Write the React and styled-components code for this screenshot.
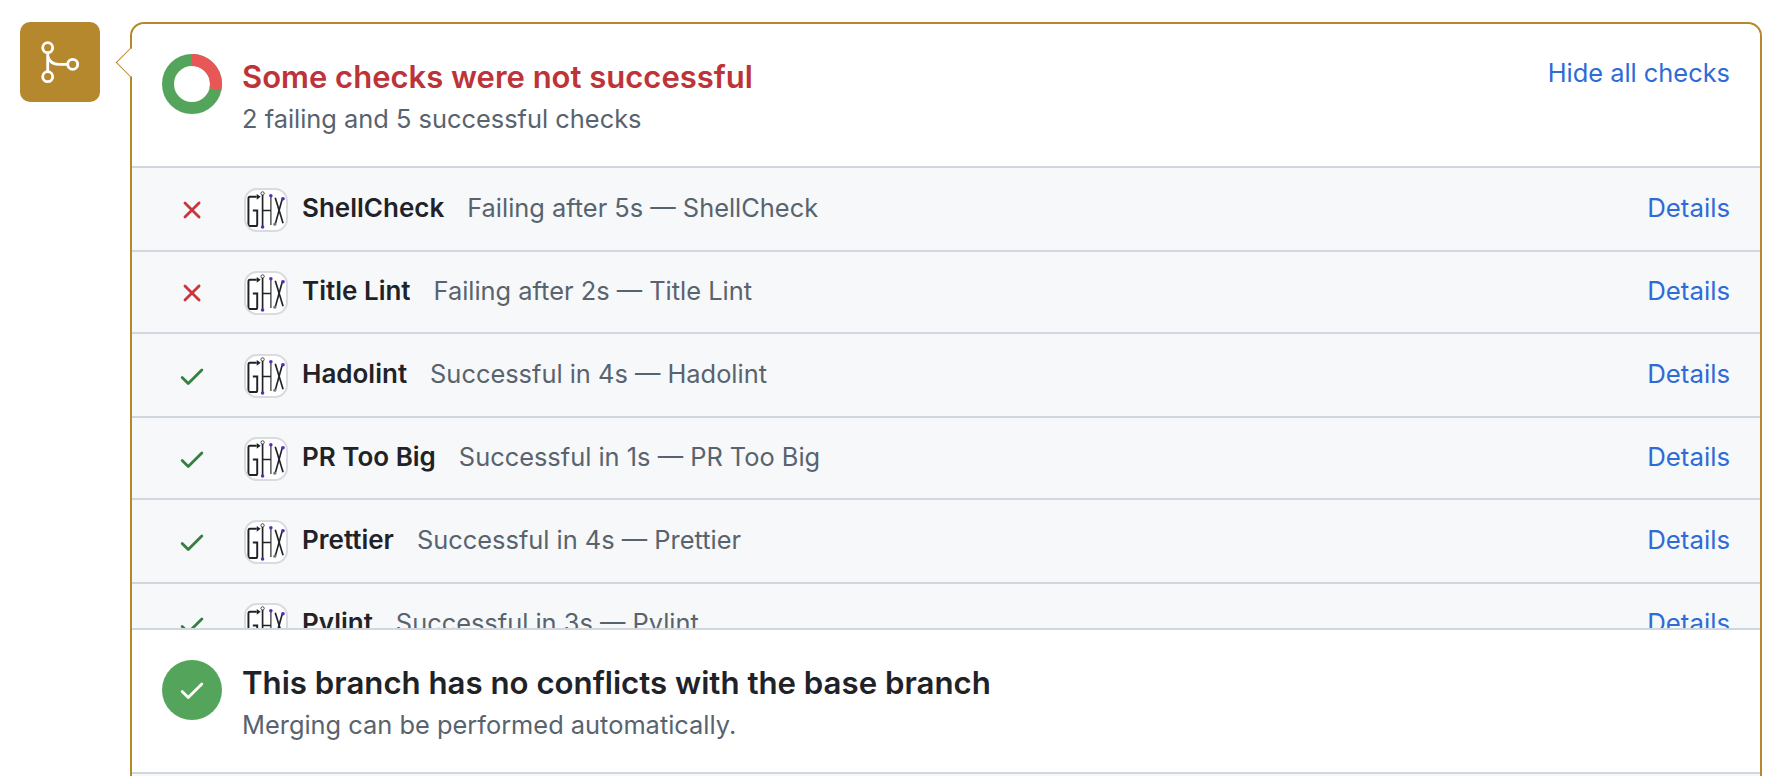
import styled, { createGlobalStyle } from "styled-components";

const CHECKS = [
    { name: "ShellCheck", text: "Failing after 5s — ShellCheck", failed: true },
    { name: "Title Lint", text: "Failing after 2s — Title Lint", failed: true },
    { name: "Hadolint", text: "Successful in 4s — Hadolint" },
    { name: "PR Too Big", text: "Successful in 1s — PR Too Big" },
    { name: "Prettier", text: "Successful in 4s — Prettier" },
    { name: "Pylint", text: "Successful in 3s — Pylint" },
];

const X_PATH = "M3.72 3.72a.75.75 0 0 1 1.06 0L8 6.94l3.22-3.22a.749.749 0 0 1 1.275.326.749.749 0 0 1-.215.734L9.06 8l3.22 3.22a.749.749 0 0 1-.326 1.275.749.749 0 0 1-.734-.215L8 9.06l-3.22 3.22a.751.751 0 0 1-1.042-.018.751.751 0 0 1-.018-1.042L6.94 8 3.72 4.78a.75.75 0 0 1 0-1.06Z";
const CHECK_PATH = "M13.78 4.22a.75.75 0 0 1 0 1.06l-7.25 7.25a.75.75 0 0 1-1.06 0L2.22 9.28a.751.751 0 0 1 .018-1.042.751.751 0 0 1 1.042-.018L6 10.94l6.72-6.72a.75.75 0 0 1 1.06 0Z";

const Octicon = ({ path, size, color }) => (
    <svg width={size} height={size} viewBox="0 0 16 16" fill={color}>
        <path d={path} />
    </svg>
);

const MergeIcon = () => (
    <svg width="48" height="48" viewBox="0 0 48 48" fill="none" stroke="#fff" strokeWidth="2.8">
        <circle cx="11.7" cy="9.7" r="5" />
        <circle cx="11.7" cy="38.7" r="5" />
        <circle cx="36.7" cy="26.3" r="5" />
        <path d="M11.7 14.7V33.7" />
        <path d="M11.7 18.5C13.5 24 17.5 26.3 23 26.3H31.7" />
    </svg>
);

const Donut = () => (
    <svg width="60" height="60" viewBox="0 0 60 60">
        <circle cx="30" cy="30" r="24" fill="none" stroke="#54a55b" strokeWidth="12" />
        <circle
            cx="30"
            cy="30"
            r="24"
            fill="none"
            stroke="#e85656"
            strokeWidth="12"
            pathLength="7"
            strokeDasharray="2 5"
            transform="rotate(-90 30 30)"
        />
    </svg>
);

const AppLogo = () => (
    <svg width="40" height="40" viewBox="0 0 41 41" fill="none">
        <g stroke="#1f2328">
            <path strokeWidth="2" d="M11 7H4Q2.5 7 2.5 9V35Q2.5 37 4 37H10Q11.5 37 11.5 35V21H7" />
            <path strokeWidth="1.7" d="M17 4V39" />
            <path strokeWidth="1.5" stroke="#555" d="M25.5 7V36" />
            <path strokeWidth="1.7" d="M17 21H25.5" />
            <path strokeWidth="1.7" d="M37.5 8L30 35" />
            <path strokeWidth="1.7" d="M30 8L38 34" />
        </g>
        <path d="M11 4l4 3-4 3Z" fill="#1f2328" />
        <circle cx="17" cy="38" r="1.8" fill="#5b2bc0" />
        <circle cx="25.5" cy="6" r="1.8" fill="#5b2bc0" />
        <circle cx="38" cy="9" r="1.8" fill="#5b2bc0" />
        <circle cx="17" cy="3.5" r="1.7" fill="#fff" stroke="#1f2328" strokeWidth=".8" />
        <circle cx="29.5" cy="35" r="1.6" fill="#777" />
    </svg>
);

export default function App() {
    return (
        <>
            <GlobalStyle />
            <SPage>
                <SBadge>
                    <MergeIcon />
                </SBadge>
                <SCard>
                    <SSection>
                        <SSectionIcon>
                            <Donut />
                        </SSectionIcon>
                        <SSectionText>
                            <STitle $danger>Some checks were not successful</STitle>
                            <SSubtitle>2 failing and 5 successful checks</SSubtitle>
                        </SSectionText>
                        <SHideLink href="#">Hide all checks</SHideLink>
                    </SSection>
                    <SCheckList>
                        {CHECKS.map((check) => (
                            <SCheckRow key={check.name}>
                                <SStatus>
                                    <Octicon
                                        path={check.failed ? X_PATH : CHECK_PATH}
                                        size={30}
                                        color={check.failed ? "#c9363c" : "#357f3f"}
                                    />
                                </SStatus>
                                <SLogo>
                                    <AppLogo />
                                </SLogo>
                                <SCheckName>{check.name}</SCheckName>
                                <SCheckText>{check.text}</SCheckText>
                                <SDetails href="#">Details</SDetails>
                            </SCheckRow>
                        ))}
                    </SCheckList>
                    <SSection $bordered>
                        <SSectionIcon>
                            <SGreenCircle>
                                <Octicon path={CHECK_PATH} size={30} color="#fff" />
                            </SGreenCircle>
                        </SSectionIcon>
                        <SSectionText>
                            <STitle>This branch has no conflicts with the base branch</STitle>
                            <SSubtitle>Merging can be performed automatically.</SSubtitle>
                        </SSectionText>
                    </SSection>
                    <SCardRest />
                </SCard>
            </SPage>
        </>
    );
}

const GlobalStyle = createGlobalStyle`
    html, body {
        margin: 0;
        height: 100%;
        overflow: hidden;
        background: #fff;
    }
    body {
        font-family: Inter, "Liberation Sans", sans-serif;
    }
`;

const SPage = styled.div`
    display: flex;
    align-items: flex-start;
    gap: 30px;
    padding: 22px 22px 0 20px;
`;

const SBadge = styled.div`
    flex: none;
    width: 80px;
    height: 80px;
    border-radius: 10px;
    background: #b5882d;
    display: flex;
    align-items: center;
    justify-content: center;
`;

const SCard = styled.div`
    flex: 1;
    position: relative;
    border: 2px solid #b5882d;
    border-radius: 14px;
    background: #fff;

    &::before {
        content: '';
        position: absolute;
        top: 28px;
        left: -12px;
        width: 20px;
        height: 20px;
        background: #fff;
        border-left: 1.5px solid #b5882d;
        border-bottom: 1.5px solid #b5882d;
        transform: rotate(45deg);
    }
`;

const SSection = styled.div`
    position: relative;
    height: ${(props) => (props.$bordered ? 144 : 142)}px;
    box-sizing: border-box;
    display: flex;
    align-items: flex-start;
    padding: 30px 30px 0 30px;
    background: #fff;
    border-radius: 14px 14px 0 0;
    ${(props) => props.$bordered && "border-top: 2px solid #d0d7de; border-radius: 0;"}
`;

const SSectionIcon = styled.div`
    flex: none;
    width: 60px;
    height: 60px;
    margin-right: 20px;
`;

const SSectionText = styled.div`
    flex: 1;
    display: flex;
    flex-direction: column;
    gap: 7px;
    padding-top: 4px;
`;

const STitle = styled.h3`
    margin: 0;
    font-size: ${(props) => (props.$danger ? 31 : 31.2)}px;
    line-height: 38px;
    font-weight: 600;
    color: ${(props) => (props.$danger ? "#bd3338" : "#1f2328")};
`;

const SSubtitle = styled.p`
    margin: 0;
    font-size: 25.4px;
    line-height: 32px;
    color: #59636e;
`;

const SHideLink = styled.a`
    font-size: 25.4px;
    line-height: 32px;
    color: #2e6bd6;
    text-decoration: none;
    margin-top: 3px;
`;

const SGreenCircle = styled.div`
    width: 60px;
    height: 60px;
    border-radius: 50%;
    background: #54a55b;
    display: flex;
    align-items: center;
    justify-content: center;
`;

const SCheckList = styled.div`
    height: 462px;
    overflow: hidden;
    background: #f6f8fa;
`;

const SCheckRow = styled.div`
    box-sizing: border-box;
    height: 84px;
    display: flex;
    align-items: center;
    padding: 2px 30px 0 0;
    border-top: 2px solid #d0d7de;

    &:nth-child(even) {
        height: 82px;
    }
`;

const SStatus = styled.div`
    flex: none;
    width: 60px;
    margin: 0 22px 0 30px;
    display: flex;
    justify-content: center;
`;

const SLogo = styled.div`
    flex: none;
    box-sizing: border-box;
    width: 44px;
    height: 44px;
    border: 2px solid #d8dbdf;
    border-radius: 13px;
    background: #fff;
    overflow: hidden;
    margin-right: 14px;
`;

const SCheckName = styled.strong`
    font-size: 26px;
    font-weight: 600;
    color: #1f2328;
    margin-right: 23px;
    padding-bottom: 6px;
`;

const SCheckText = styled.span`
    flex: 1;
    font-size: 25.4px;
    color: #59636e;
    padding-bottom: 6px;
`;

const SDetails = styled.a`
    font-size: 25.8px;
    color: #2e6bd6;
    text-decoration: none;
    padding-bottom: 6px;
`;

const SCardRest = styled.div`
    height: 60px;
    border-top: 2px solid #d0d7de;
    background: #f6f8fa;
`;
